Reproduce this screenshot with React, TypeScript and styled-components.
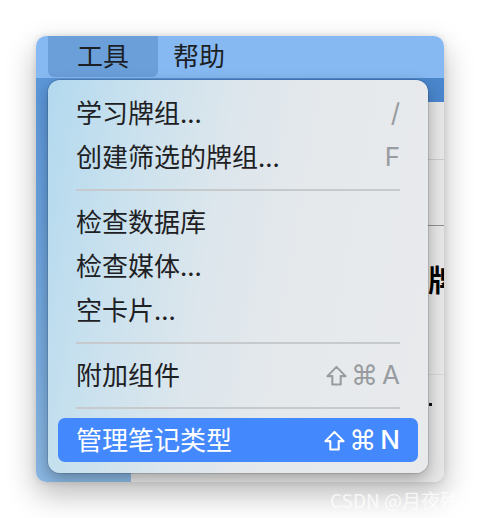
import React from 'react';
import styled, { createGlobalStyle } from 'styled-components';

const GlobalStyle = createGlobalStyle`
  html, body {
    margin: 0;
    padding: 0;
    background: #ffffff;
  }
  body {
    font-family: "Noto Sans CJK SC", "Noto Sans", sans-serif;
  }
`;

const Page = styled.div`
  width: 480px;
  height: 518px;
  padding: 36px;
  box-sizing: border-box;
  position: relative;
  overflow: hidden;
`;

const Window = styled.div`
  position: relative;
  width: 408px;
  height: 446px;
  border-radius: 10px;
  overflow: hidden;
  display: flex;
  flex-direction: column;
  box-shadow: 0 12px 30px rgba(0, 0, 0, 0.28), 0 0 6px rgba(0, 0, 0, 0.12);
`;

const MenuBar = styled.div`
  height: 42px;
  flex-shrink: 0;
  display: flex;
  align-items: flex-start;
  padding-left: 12px;
  background: #86b9f2;
`;

const BarItem = styled.div<{ $active?: boolean }>`
  height: 41px;
  box-sizing: border-box;
  padding: 0 ${p => (p.$active ? '29px' : '15px')};
  display: flex;
  align-items: center;
  padding-bottom: 5px;
  border-radius: 0 0 6px 6px;
  background: ${p => (p.$active ? '#6b9fda' : 'transparent')};
  font-size: 26px;
  color: #1c1f24;
`;

const TitleStrip = styled.div`
  height: 24px;
  flex-shrink: 0;
  background: linear-gradient(90deg, #5c97d9, #4a86cd);
`;

const Body = styled.div`
  flex: 1;
  display: flex;
`;

const Sidebar = styled.div`
  width: 95px;
  background: linear-gradient(180deg, #5d98d9 0%, #79acdf 70%, #8ab7e2 100%);
`;

const Main = styled.div`
  flex: 1;
  display: flex;
  flex-direction: column;
  background: #e6e6e6;
`;

const MainRow = styled.div<{ $h: number; $line?: string }>`
  height: ${p => p.$h}px;
  flex-shrink: 0;
  box-sizing: border-box;
  border-bottom: 1px solid ${p => p.$line || 'transparent'};
  display: flex;
  align-items: center;
  justify-content: flex-end;
  overflow: hidden;
`;

const CutText = styled.span`
  margin-right: -14px;
  font-size: 30px;
  font-weight: 700;
  line-height: 1;
  color: #000;
`;

const Dot = styled.span`
  margin-right: 12px;
  width: 3px;
  height: 3px;
  background: #111;
`;

const Menu = styled.div`
  position: absolute;
  left: 12px;
  top: 44px;
  width: 380px;
  box-sizing: border-box;
  padding: 11px 10px;
  border-radius: 12px;
  background: linear-gradient(100deg, #b3d9ef 0%, #c9e1ee 20%, #dce6ec 42%, #e6e9ec 65%, #e8eaec 100%);
  box-shadow: 0 6px 16px rgba(0, 0, 0, 0.3), 0 0 0 1px rgba(0, 0, 0, 0.12);
  display: flex;
  flex-direction: column;
`;

const Item = styled.div<{ $selected?: boolean }>`
  height: 44px;
  display: flex;
  align-items: center;
  justify-content: space-between;
  padding: 0 18px;
  border-radius: 7px;
  background: ${p => (p.$selected ? '#4488fd' : 'transparent')};
  color: ${p => (p.$selected ? '#ffffff' : '#1e2124')};
  font-size: 26px;
`;

const Label = styled.span`
  line-height: 1;
  padding-bottom: 3px;
`;

const Shortcut = styled.span<{ $selected?: boolean }>`
  display: flex;
  align-items: center;
  gap: 4px;
  color: ${p => (p.$selected ? '#ffffff' : '#989ca0')};
  font-family: "Inter", "Noto Sans", sans-serif;
  font-size: 26px;
  font-weight: ${p => (p.$selected ? 500 : 400)};
  line-height: 1;
`;

const Cmd = styled.span`
  font-family: "DejaVu Sans", sans-serif;
  font-size: 27px;
  line-height: 1;
`;

const Separator = styled.div`
  height: 21px;
  display: flex;
  align-items: center;
  padding: 0 18px;

  &::after {
    content: '';
    flex: 1;
    height: 2px;
    background: #c6cacd;
  }
`;

const Watermark = styled.div`
  position: absolute;
  left: 330px;
  top: 486px;
  font-family: "Noto Sans CJK SC", "Noto Sans", sans-serif;
  font-size: 19px;
  color: rgba(255, 255, 255, 0.75);
  white-space: nowrap;
`;

const ShiftIcon = () => (
  <svg width="21" height="21" viewBox="0 0 20 20" fill="none" stroke="currentColor" strokeWidth="2" strokeLinejoin="round">
    <path d="M10 1.8 L18.6 10.6 H14 V18.6 H6 V10.6 H1.4 Z" />
  </svg>
);

type Entry =
  | { kind: 'item'; label: string; keys?: string; shift?: boolean; cmd?: boolean; selected?: boolean }
  | { kind: 'sep' };

const entries: Entry[] = [
  { kind: 'item', label: '学习牌组...', keys: '/' },
  { kind: 'item', label: '创建筛选的牌组...', keys: 'F' },
  { kind: 'sep' },
  { kind: 'item', label: '检查数据库' },
  { kind: 'item', label: '检查媒体...' },
  { kind: 'item', label: '空卡片...' },
  { kind: 'sep' },
  { kind: 'item', label: '附加组件', keys: 'A', shift: true, cmd: true },
  { kind: 'sep' },
  { kind: 'item', label: '管理笔记类型', keys: 'N', shift: true, cmd: true, selected: true },
];

const App: React.FC = () => {
  return (
    <Page>
      <GlobalStyle />
      <Window>
        <MenuBar>
          <BarItem $active>工具</BarItem>
          <BarItem>帮助</BarItem>
        </MenuBar>
        <TitleStrip />
        <Body>
          <Sidebar />
          <Main>
            <MainRow $h={58} $line="#cbcbcb" />
            <MainRow $h={66} $line="#8f8f8f" />
            <MainRow $h={17} />
            <MainRow $h={70}>
              <CutText>牌</CutText>
            </MainRow>
            <MainRow $h={62} $line="#d6d6d6" />
            <MainRow $h={60}>
              <Dot />
            </MainRow>
          </Main>
        </Body>
        <Menu>
          {entries.map((e, i) =>
            e.kind === 'sep' ? (
              <Separator key={i} />
            ) : (
              <Item key={i} $selected={e.selected}>
                <Label>{e.label}</Label>
                {e.keys && (
                  <Shortcut $selected={e.selected}>
                    {e.shift && <ShiftIcon />}
                    {e.cmd && <Cmd>⌘</Cmd>}
                    <span>{e.keys}</span>
                  </Shortcut>
                )}
              </Item>
            )
          )}
        </Menu>
      </Window>
      <Watermark>CSDN @月夜残影</Watermark>
    </Page>
  );
};

export default App;
